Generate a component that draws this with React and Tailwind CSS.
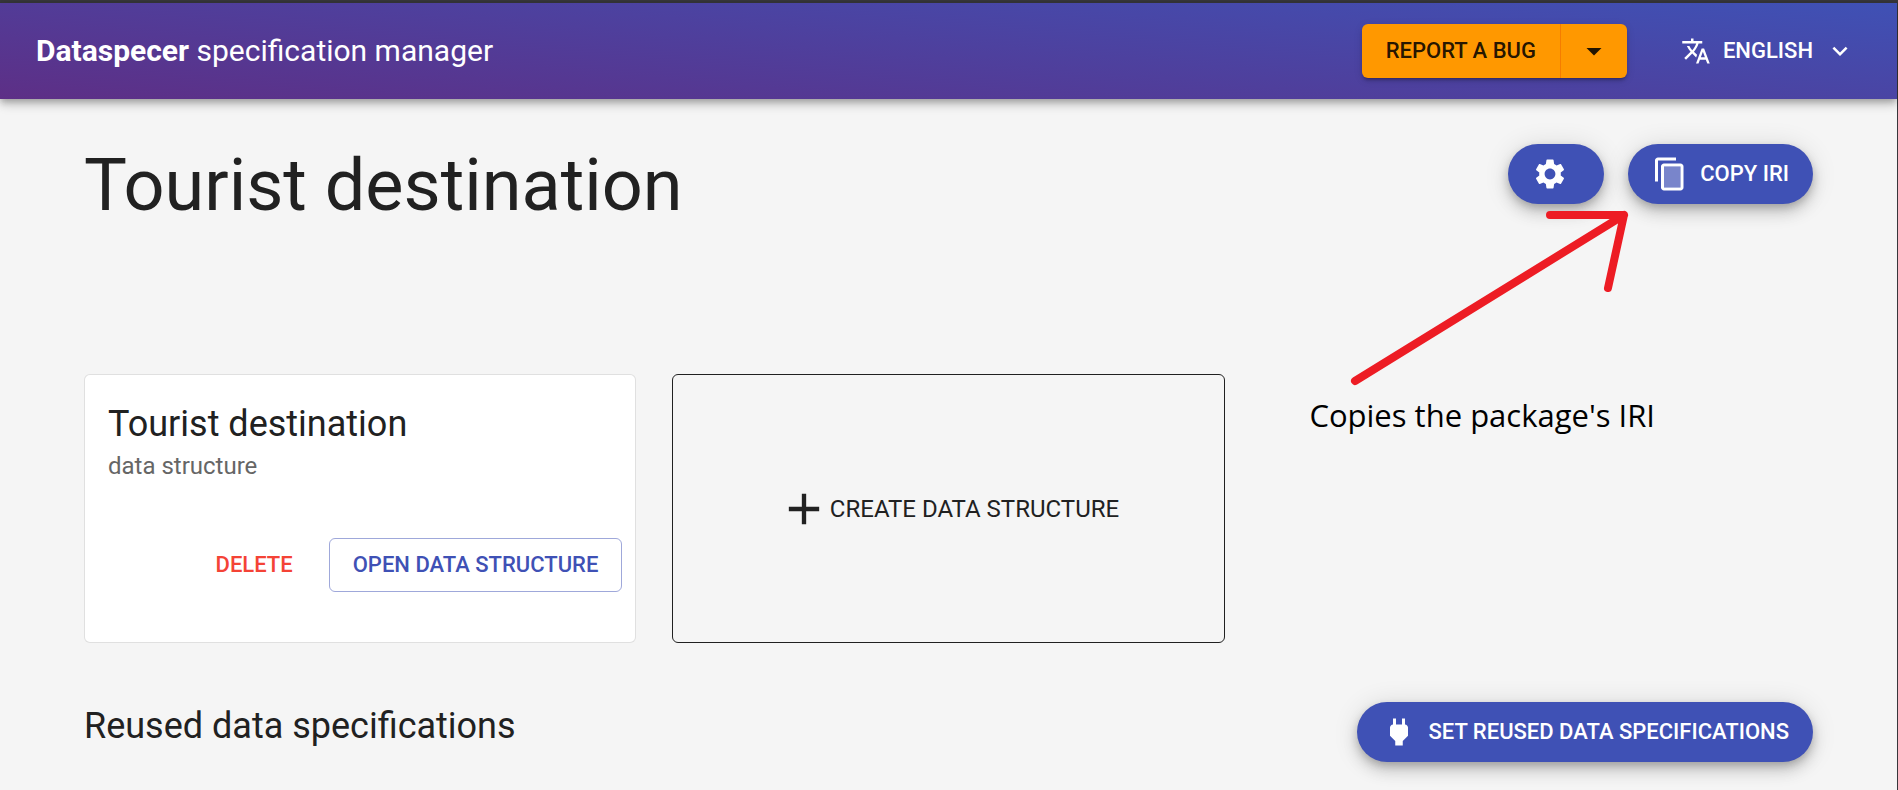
const FAB =
  "flex h-[60px] items-center gap-3 rounded-full bg-[#3f51b5] px-6 text-[22px] leading-9 font-medium text-white uppercase shadow-[0_4px_8px_-1px_rgba(0,0,0,0.2),0_9px_15px_0_rgba(0,0,0,0.14),0_2px_27px_0_rgba(0,0,0,0.12)]";

function Icon({ className, children }) {
  return (
    <svg viewBox="0 0 24 24" fill="currentColor" aria-hidden="true" className={`shrink-0 ${className}`}>
      {children}
    </svg>
  );
}

function Header() {
  return (
    <header className="flex h-24 items-center justify-between bg-[linear-gradient(5deg,#5d2f86,#3f51b5)] px-9 text-white shadow-[0_3px_6px_-1px_rgba(0,0,0,0.2),0_6px_8px_0_rgba(0,0,0,0.14),0_2px_15px_0_rgba(0,0,0,0.12)]">
      <div className="text-[30px] leading-12">
        <strong className="font-bold">Dataspecer</strong> specification manager
      </div>
      <div className="flex items-center gap-12">
        <div className="flex h-[54px] rounded-md bg-[#ff9800] text-black/87 shadow-[0_4px_2px_-3px_rgba(0,0,0,0.2),0_3px_3px_0_rgba(0,0,0,0.14),0_2px_8px_0_rgba(0,0,0,0.12)]">
          <button type="button" className="border-r border-[#f57c00] px-6 text-[22px] leading-9 font-medium uppercase">
            Report a bug
          </button>
          <button type="button" aria-label="More report options" className="flex w-[66px] items-center justify-center">
            <Icon className="size-9">
              <path d="m7 10 5 5 5-5z" />
            </Icon>
          </button>
        </div>
        <button type="button" className="flex items-center gap-3 px-1.5 text-[22px] leading-9 font-medium uppercase">
          <Icon className="size-[30px]">
            <path d="m12.87 15.07-2.54-2.51.03-.03c1.74-1.94 2.98-4.17 3.71-6.53H17V4h-7V2H8v2H1v1.99h11.17C11.5 7.92 10.44 9.75 9 11.35 8.07 10.32 7.3 9.19 6.69 8h-2c.73 1.63 1.73 3.17 2.98 4.56l-5.09 5.02L4 19l5-5 3.11 3.11.76-2.04zM18.5 10h-2L12 22h2l1.12-3h4.75L21 22h2l-4.5-12zm-2.62 7 1.62-4.33L19.12 17h-3.24z" />
          </Icon>
          English
          <Icon className="size-[30px]">
            <path d="M16.59 8.59 12 13.17 7.41 8.59 6 10l6 6 6-6z" />
          </Icon>
        </button>
      </div>
    </header>
  );
}

function Annotation() {
  return (
    <div className="pointer-events-none absolute top-[65px] right-[158px]">
      <svg width="290" height="182" viewBox="0 0 290 182" fill="none" stroke="#ed1c24" strokeWidth="8" strokeLinecap="round" strokeLinejoin="round" className="ml-9" aria-hidden="true">
        <path d="M10 172 279 6M205 6h74l-16 73" />
      </svg>
      <p className="mt-1 font-['Open_Sans','Noto_Sans',sans-serif] text-[31px] leading-10 whitespace-nowrap text-black">
        Copies the package's IRI
      </p>
    </div>
  );
}

export default function App() {
  return (
    <div className="min-h-screen border-t-3 border-r border-[#37373b] bg-[#f5f5f5] font-[Roboto,sans-serif] text-[#212121]">
      <Header />
      <main className="px-[84px] pt-[45px] pb-7">
        <section className="relative flex items-start justify-between gap-6">
          <h1 className="text-[72px] leading-[84px]">Tourist destination</h1>
          <div className="flex gap-6">
            <button type="button" aria-label="Settings" className={`${FAB} w-24`}>
              <Icon className="size-9">
                <path d="M19.14 12.94c.04-.3.06-.61.06-.94 0-.32-.02-.64-.07-.94l2.03-1.58c.18-.14.23-.41.12-.61l-1.92-3.32c-.12-.22-.37-.29-.59-.22l-2.39.96c-.5-.38-1.03-.7-1.62-.94l-.36-2.54c-.04-.24-.24-.41-.48-.41h-3.84c-.24 0-.43.17-.47.41l-.36 2.54c-.59.24-1.13.57-1.62.94l-2.39-.96c-.22-.08-.47 0-.59.22L2.74 8.87c-.12.21-.08.47.12.61l2.03 1.58c-.05.3-.09.63-.09.94s.02.64.07.94l-2.03 1.58c-.18.14-.23.41-.12.61l1.92 3.32c.12.22.37.29.59.22l2.39-.96c.5.38 1.03.7 1.62.94l.36 2.54c.05.24.24.41.48.41h3.84c.24 0 .44-.17.47-.41l.36-2.54c.59-.24 1.13-.56 1.62-.94l2.39.96c.22.08.47 0 .59-.22l1.92-3.32c.12-.22.07-.47-.12-.61l-2.01-1.58zM12 15.6c-1.98 0-3.6-1.62-3.6-3.6s1.62-3.6 3.6-3.6 3.6 1.62 3.6 3.6-1.62 3.6-3.6 3.6z" />
              </Icon>
            </button>
            <button type="button" className={FAB}>
              <Icon className="size-9">
                <path d="M8 7h11v14H8z" opacity=".3" />
                <path d="M16 1H4c-1.1 0-2 .9-2 2v14h2V3h12V1zm3 4H8c-1.1 0-2 .9-2 2v14c0 1.1.9 2 2 2h11c1.1 0 2-.9 2-2V7c0-1.1-.9-2-2-2zm0 16H8V7h11v14z" />
              </Icon>
              Copy IRI
            </button>
          </div>
          <Annotation />
        </section>

        <section className="mt-[146px] grid grid-cols-3 gap-9">
          <article className="flex h-[269px] flex-col rounded-md border border-black/12 bg-white">
            <div className="px-[23px] pt-[25px]">
              <h2 className="text-[36px] leading-12">Tourist destination</h2>
              <p className="text-[24px] leading-9 text-[#666666]">data structure</p>
            </div>
            <div className="mt-auto mb-[50px] flex items-center justify-end gap-6 px-[13px]">
              <button type="button" className="px-3 text-[22px] leading-9 font-medium text-[#f44336] uppercase">
                Delete
              </button>
              <button type="button" className="h-[54px] rounded-md border border-[#3f51b5]/50 px-[23px] text-[22px] leading-9 font-medium text-[#3f51b5] uppercase">
                Open data structure
              </button>
            </div>
          </article>
          <button type="button" className="flex h-[269px] items-center justify-center rounded-md border border-[#212121] text-[24px] leading-9 uppercase">
            <Icon className="size-[52px]">
              <path d="M19 13h-6v6h-2v-6H5v-2h6V5h2v6h6v2z" />
            </Icon>
            Create data structure
          </button>
        </section>

        <section className="mt-[59px] flex items-start justify-between gap-6">
          <h2 className="text-[36px] leading-12">Reused data specifications</h2>
          <button type="button" className={FAB}>
            <Icon className="size-9">
              <path d="M16.01 7 16 3h-2v4h-4V3H8v4h-.01C7 6.99 6 7.99 6 8.99v5.49L9.5 18v3h5v-3l3.5-3.51v-5.5c0-1-1-2-1.99-1.99z" />
            </Icon>
            Set reused data specifications
          </button>
        </section>
      </main>
    </div>
  );
}
